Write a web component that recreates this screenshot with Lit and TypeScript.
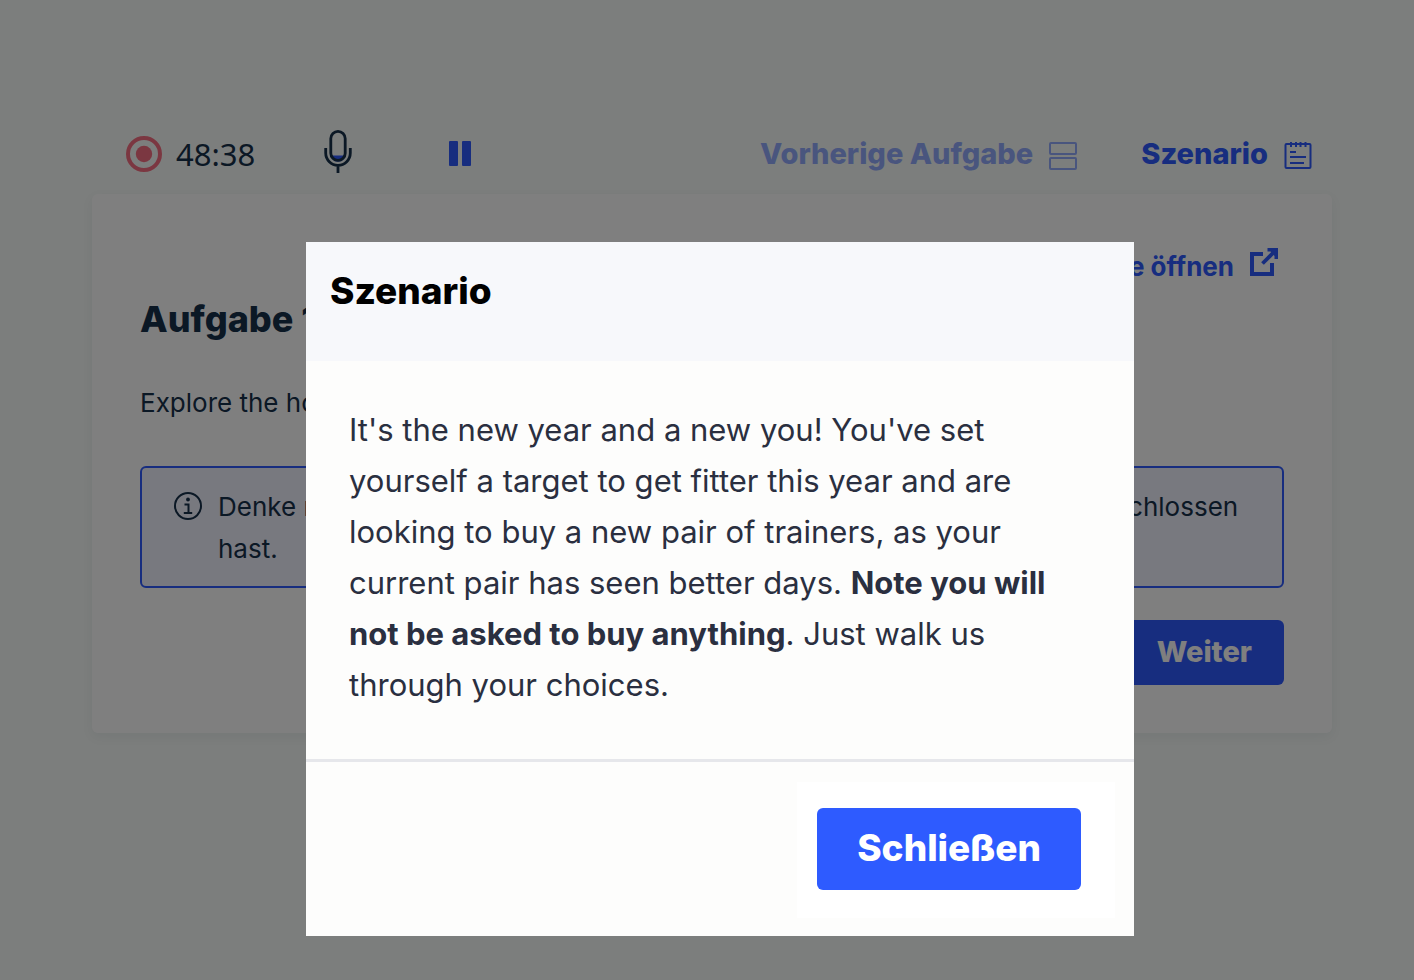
import { LitElement, html, css } from "lit";
import { customElement, property, state } from "lit/decorators.js";

@customElement("app-root")
export class AppRoot extends LitElement {
  @property() time = "48:38";
  @state() private scenarioOpen = true;

  static styles = css`
    :host {
      display: block;
      position: relative;
      min-height: 100vh;
      box-sizing: border-box;
      padding: 114px 82px 44px 92px;
      background: #f8fcfa;
      color: #16304a;
      font-family: Inter, "Liberation Sans", sans-serif;
      --blue: #2e5bff;
    }
    * { box-sizing: border-box; }
    h1, h2, p { margin: 0; }
    svg { display: block; flex: none; }
    button { font: inherit; border: 0; padding: 0; background: none; cursor: pointer; }
    .toolbar {
      display: flex;
      align-items: center;
      height: 80px;
      padding: 0 20px 0 34px;
    }
    .timer {
      display: flex;
      align-items: center;
      gap: 14px;
      font: 400 31px/38px "Noto Sans", sans-serif;
    }
    .mic { margin-left: 69px; }
    .pause { margin-left: 96px; color: var(--blue); }
    .links { display: flex; gap: 64px; margin-left: auto; }
    .link {
      display: flex;
      align-items: center;
      gap: 16px;
      color: var(--blue);
      font-weight: 800;
      font-size: 29px;
      line-height: 40px;
      text-decoration: none;
    }
    .link:disabled { opacity: 0.5; }
    .card {
      padding: 48px;
      background: #fff;
      border-radius: 6px;
      box-shadow: 0 4px 12px rgba(22, 48, 74, 0.06);
    }
    .open { display: flex; justify-content: flex-end; padding-right: 6px; }
    .open .link { font-size: 26px; font-weight: 700; line-height: 50px; }
    .card h1 { margin-top: 3px; font-weight: 800; font-size: 36px; line-height: 48px; }
    .task { margin-top: 39px; font-size: 26px; line-height: 42px; }
    .hint {
      display: flex;
      gap: 16px;
      margin-top: 42px;
      padding: 18px 30px 16px 32px;
      border: 2px solid var(--blue);
      border-radius: 6px;
      background: #f0f2ff;
      font-size: 26px;
      line-height: 42px;
    }
    .hint svg { margin-top: 6px; }
    .actions { display: flex; justify-content: flex-end; margin-top: 32px; }
    .primary {
      background: var(--blue);
      color: #fff;
      border-radius: 6px;
      font-weight: 800;
    }
    .next { padding: 0 32px 2px; height: 65px; font-size: 29px; }
    .overlay {
      position: absolute;
      inset: 0;
      padding: 242px 280px 44px 306px;
      background: rgba(0, 0, 0, 0.5);
    }
    .modal { background: #fdfdfc; color: #2a2f40; }
    .modal header { padding: 24px 24px 45px; background: #f7f8fb; color: #000; }
    .modal h2 { font-weight: 800; font-size: 37px; line-height: 50px; }
    .scenario {
      padding: 43px 43px 49px;
      font-size: 31px;
      line-height: 51px;
    }
    .scenario b { font-weight: 700; }
    .modal footer {
      display: flex;
      justify-content: flex-end;
      padding: 20px 19px 18px;
      border-top: 3px solid #e6e7eb;
    }
    .patch { padding: 26px 34px 28px 20px; background: #fff; }
    .close { height: 82px; padding: 0 40px 4px; font-size: 37px; }
  `;

  private toggle = () => {
    this.scenarioOpen = !this.scenarioOpen;
  };

  render() {
    return html`
      <nav class="toolbar">
        <div class="timer">
          <svg width="36" height="36" viewBox="0 0 36 36" fill="none" stroke="#f76f82" stroke-width="4">
            <circle cx="18" cy="18" r="16" />
            <circle cx="18" cy="18" r="8.2" fill="#f76f82" stroke="none" />
          </svg>
          <time>${this.time}</time>
        </div>
        <svg class="mic" width="28" height="48" viewBox="0 0 28 48" fill="none" stroke="#16304a" stroke-width="2.8">
          <path d="M7 25.500h14l-2 4.500-3 1.500h-4l-3-1.500z" fill="#2e5bff" stroke="none" />
          <rect x="6.800" y="1.400" width="14.400" height="29" rx="7.200" />
          <path d="M1.700 18v5a12.300 12.300 0 0 0 24.600 0V18M14 35.500V43" />
        </svg>
        <button class="pause" aria-label="Pause">
          <svg width="24" height="26" viewBox="0 0 24 26" fill="currentColor">
            <rect x="1" width="9" height="25" rx="1" />
            <rect x="14" width="9" height="25" rx="1" />
          </svg>
        </button>
        <div class="links">
          <button class="link" disabled>
            Vorherige Aufgabe
            <svg width="28" height="36" viewBox="0 0 28 36" fill="none" stroke="currentColor" stroke-width="2">
              <rect x="1" y="7" width="26" height="11" rx="1" />
              <rect x="1" y="22" width="26" height="11" rx="1" />
            </svg>
          </button>
          <button class="link" @click=${this.toggle}>
            Szenario
            <svg width="28" height="32" viewBox="0 0 28 32" fill="none" stroke="currentColor" stroke-width="2">
              <rect x="1.500" y="6" width="25" height="24" rx="1" />
              <path d="M7 4v5M12 4v5M16.500 4v5M21.500 4v5M6 14h6M6 19h16M6 25h14" />
            </svg>
          </button>
        </div>
      </nav>

      <main class="card">
        <div class="open">
          <a class="link" href="#website">
            Website öffnen
            <svg width="28" height="38" viewBox="0 0 28 38" fill="none" stroke="currentColor" stroke-width="4">
              <path d="M13 6H2v20h20V15" />
              <path d="M12.500 15.500 24 4" stroke-width="3.800" />
              <path d="M17.500 0H28v11h-3.500v-3L20.500 3.500h-3z" fill="currentColor" stroke="none" />
            </svg>
          </a>
        </div>
        <h1>Aufgabe 1</h1>
        <p class="task">Explore the homepage.</p>
        <div class="hint">
          <svg width="28" height="28" viewBox="0 0 28 28" fill="none" stroke="#16304a" stroke-width="2">
            <circle cx="14" cy="14" r="13" />
            <path d="M10.500 12.500h4V21M9.800 21h8.400" />
            <circle cx="14" cy="7.500" r="1.900" fill="#16304a" stroke="none" />
          </svg>
          <p>
            Denke nach und klicke danach auf Weiter, sobald du diese Aufgabe abgeschlossen hast.
          </p>
        </div>
        <div class="actions">
          <button class="primary next">Weiter</button>
        </div>
      </main>

      ${this.scenarioOpen
        ? html`
            <div class="overlay">
              <section class="modal" role="dialog" aria-modal="true" aria-labelledby="title">
                <header><h2 id="title">Szenario</h2></header>
                <p class="scenario">
                  It's the new year and a new you! You've set yourself a target to get fitter this
                  year and are looking to buy a new pair of trainers, as your current pair has seen
                  better days. <b>Note you will not be asked to buy anything</b>. Just walk us
                  through your choices.
                </p>
                <footer>
                  <div class="patch">
                    <button class="primary close" @click=${this.toggle}>Schließen</button>
                  </div>
                </footer>
              </section>
            </div>
          `
        : ""}
    `;
  }
}
